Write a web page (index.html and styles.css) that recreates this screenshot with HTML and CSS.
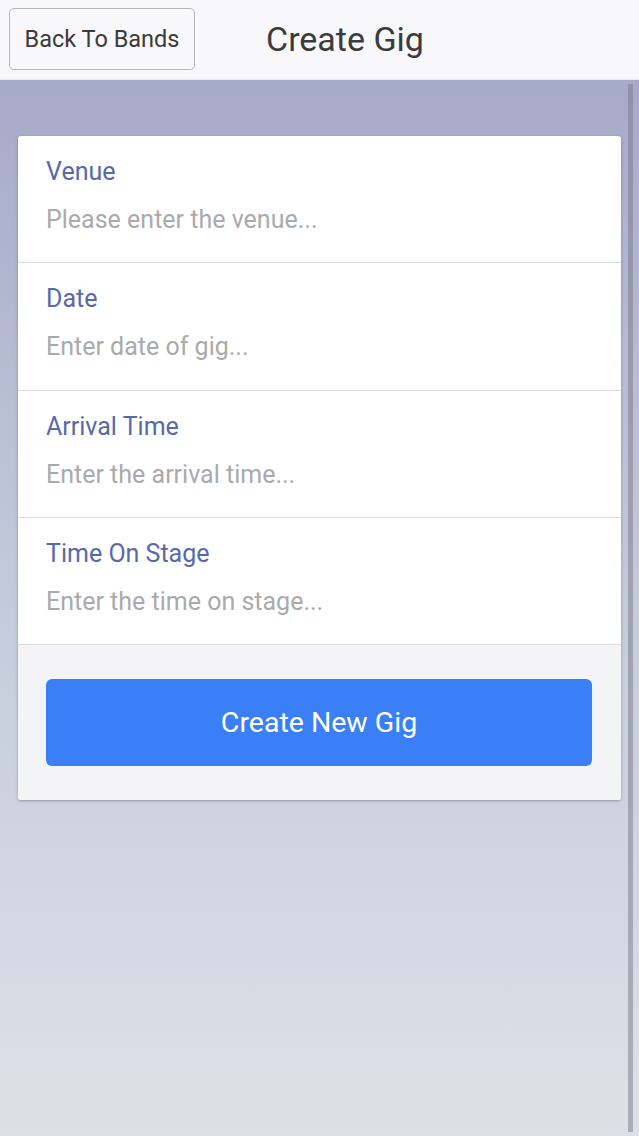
FILE: index.html
```html
<!DOCTYPE html>
<html>
<head>
<meta charset="utf-8">
<link rel="stylesheet" href="styles.css">
</head>
<body>
<header class="bar">
  <button class="back-btn">Back To Bands</button>
  <h1 class="title">Create Gig</h1>
</header>
<main class="content">
  <form class="card">
    <div class="field">
      <label class="field-label">Venue</label>
      <input class="field-input" type="text" placeholder="Please enter the venue...">
    </div>
    <div class="field">
      <label class="field-label">Date</label>
      <input class="field-input" type="text" placeholder="Enter date of gig...">
    </div>
    <div class="field">
      <label class="field-label">Arrival Time</label>
      <input class="field-input" type="text" placeholder="Enter the arrival time...">
    </div>
    <div class="field">
      <label class="field-label">Time On Stage</label>
      <input class="field-input" type="text" placeholder="Enter the time on stage...">
    </div>
    <div class="card-footer">
      <button class="primary-btn" type="button">Create New Gig</button>
    </div>
  </form>
  <div class="scrollbar"></div>
</main>
</body>
</html>
```

FILE: styles.css
```css
* { box-sizing: border-box; }
html, body { margin: 0; padding: 0; height: 100%; }
body {
  font-family: Roboto, "Liberation Sans", sans-serif;
  width: 639px;
  height: 1136px;
  overflow: hidden;
  display: flex;
  flex-direction: column;
}
.bar {
  height: 80px;
  flex: none;
  background: #f8f7f9;
  border-bottom: 1px solid #ecebef;
  display: flex;
  align-items: center;
  padding-left: 9px;
}
.back-btn {
  width: 186px;
  height: 62px;
  margin-top: -1px;
  background: #f8f7f9;
  border: 1px solid #b5b5b8;
  border-radius: 5px;
  font-family: Roboto, "Liberation Sans", sans-serif;
  font-size: 23.5px;
  color: #3b3b3d;
  padding: 0;
}
.title {
  margin: -2px 0 0 71px;
  font-size: 34px;
  font-weight: 400;
  color: #3b3b3d;
}
.content {
  flex: 1;
  position: relative;
  background: linear-gradient(to bottom, #a6aac9 0%, #c4cbdb 50%, #dbe2e7 100%);
  padding: 56px 18px 0 18px;
}
.card {
  margin: 0;
  background: #fff;
  border-radius: 3px;
  box-shadow: 0 1px 3px rgba(0,0,0,0.3);
  overflow: hidden;
}
.field {
  display: flex;
  flex-direction: column;
  height: 127.3px;
  padding: 22px 28px 0 28px;
  border-bottom: 1px solid #dcdce0;
}
.field-label {
  font-size: 25px;
  line-height: 28px;
  color: #5769a9;
}
.field-input {
  margin-top: 20px;
  border: none;
  outline: none;
  padding: 0;
  font-family: Roboto, "Liberation Sans", sans-serif;
  font-size: 25px;
  line-height: 28px;
  height: 28px;
  background: transparent;
  color: #333;
}
.field-input::placeholder { color: #aaaaad; }
.card-footer {
  background: #f4f4f6;
  padding: 34px 29px 34px 28px;
}
.primary-btn {
  width: 100%;
  height: 87px;
  border: none;
  border-radius: 6px;
  background: #3a7ff5;
  color: #fff;
  font-family: Roboto, "Liberation Sans", sans-serif;
  font-size: 28.5px;
  display: block;
}
.scrollbar {
  position: absolute;
  top: 4px;
  bottom: 4px;
  right: 6px;
  width: 5px;
  background: rgba(120,122,135,0.5);
}
```
